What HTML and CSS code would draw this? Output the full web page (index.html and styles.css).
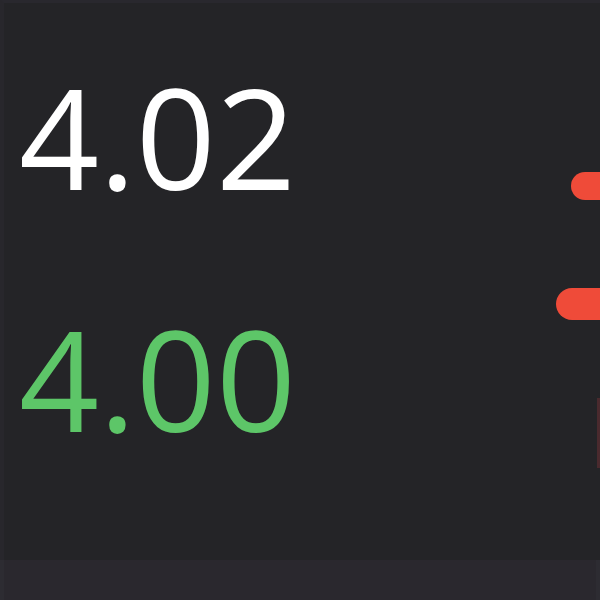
FILE: index.html
```html
<!DOCTYPE html>
<html lang="en">
<head>
    <meta charset="UTF-8">
    <meta name="viewport" content="width=device-width, initial-scale=1.0">
    <title>Quote</title>
    <link rel="stylesheet" href="styles.css">
</head>
<body>
    <div class="panel">
        <div class="quotes">
            <div class="value">4.02</div>
            <div class="value up">4.00</div>
        </div>
        <div class="marks">
            <span class="mark mark-a"></span>
            <span class="mark mark-b"></span>
            <span class="mark-line"></span>
        </div>
    </div>
    <div class="footer"></div>
</body>
</html>
```
FILE: styles.css
```css
/* General Styles */
body {
    margin: 0;
    padding: 0;
    width: 600px;
    height: 600px;
    overflow: hidden;
    background-color: #242427;
    font-family: "Open Sans", "Noto Sans", sans-serif;
    display: flex;
    flex-direction: column;
}

.panel {
    height: 560px;
    display: flex;
    border-top: 3px solid #29282e;
    border-left: 4px solid #28272c;
    box-sizing: border-box;
}

.quotes {
    flex: 1;
    display: flex;
    flex-direction: column;
    gap: 102px;
    padding: 63px 0 0 15px;
}

.value {
    color: #ffffff;
    font-size: 140px;
    line-height: 140px;
    height: 140px;
}

.value.up {
    color: #5dc668;
}

/* red markers cut by the right edge */
.marks {
    width: 45px;
    position: relative;
    overflow: hidden;
}

.mark {
    position: absolute;
    display: block;
    right: 0;
    background-color: #ef4b39;
    border-radius: 16px 0 0 16px;
}

.mark-a {
    top: 169px;
    width: 29px;
    height: 28px;
}

.mark-b {
    top: 285px;
    width: 44px;
    height: 32px;
}

.mark-line {
    position: absolute;
    top: 395px;
    right: 0;
    width: 3px;
    height: 70px;
    background-color: #4a2a2e;
}

.footer {
    height: 40px;
    background-color: #2a282e;
    border-left: 4px solid #2d2c32;
    border-right: 4px solid #2d2c32;
}
```
